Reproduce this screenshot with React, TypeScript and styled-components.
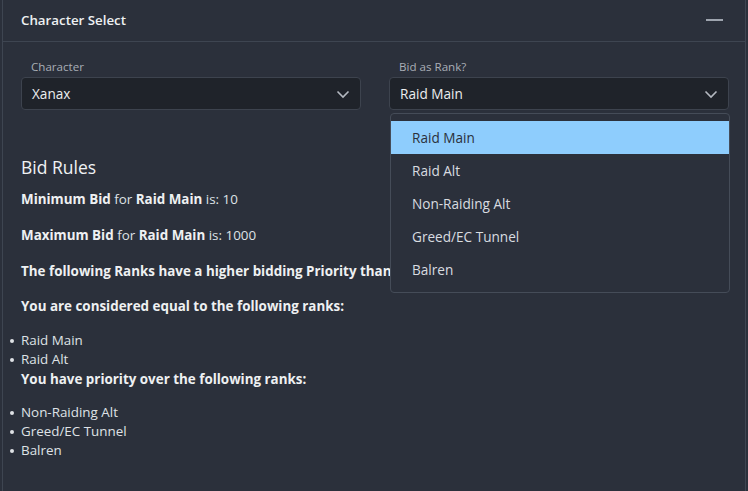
import React from "react";
import styled, { createGlobalStyle } from "styled-components";

const Global = createGlobalStyle`
  html, body { margin: 0; padding: 0; background: #2b303b; }
  body { font-family: "Segoe UI", "Open Sans", "Noto Sans", sans-serif; color: #e6e8eb; }
  * { box-sizing: border-box; }
`;

const Panel = styled.div`
  margin: 0 2px 0 2px;
  min-height: 491px;
  border-left: 1px solid #3e4551;
  border-right: 1px solid #3e4551;
  background: #2b303b;
`;

const Header = styled.div`
  height: 42px;
  display: flex;
  align-items: center;
  justify-content: space-between;
  padding: 0 22px 0 18px;
  border-bottom: 1px solid #3e4551;
`;

const Title = styled.div`
  font-size: 13.3px;
  font-weight: 600;
  color: #eef0f2;
  padding-bottom: 1px;
`;

const Minus = styled.div`
  width: 17px;
  height: 2px;
  background: #9ea4ae;
  margin-bottom: 2px;
`;

const Body = styled.div`
  padding: 17px 16px 0 18px;
`;

const Row = styled.div`
  display: grid;
  grid-template-columns: 1fr 1fr;
  gap: 28px;
`;

const Field = styled.div`
  position: relative;
  display: flex;
  flex-direction: column;
`;

const Label = styled.div`
  font-size: 11.6px;
  color: #a9aeb6;
  padding-left: 10px;
  height: 18px;
`;

const SelectBox = styled.div`
  height: 33px;
  border: 1px solid #3d434e;
  border-radius: 4px;
  background: #1f232a;
  display: flex;
  align-items: center;
  justify-content: space-between;
  padding: 0 10px 0 10px;
  font-size: 13.6px;
  color: #eceef0;
`;

const Menu = styled.div`
  position: absolute;
  top: 54px;
  left: 1px;
  right: -1px;
  background: #2b303b;
  border: 1px solid #454c58;
  border-radius: 4px;
  padding: 7px 0 6px;
  z-index: 5;
`;

const Item = styled.div<{ $active?: boolean }>`
  height: 33px;
  display: flex;
  align-items: center;
  padding-left: 21px;
  font-size: 13.6px;
  color: ${(p) => (p.$active ? "#2b303b" : "#d9dce0")};
  background: ${(p) => (p.$active ? "#8ecdfd" : "transparent")};
`;

const Rules = styled.div`
  margin-top: 45px;
`;

const Heading = styled.h4`
  margin: 0 0 10px;
  font-size: 17.5px;
  font-weight: 400;
  color: #f0f2f4;
  line-height: 24px;
`;

const Para = styled.p<{ $gap: number }>`
  margin: 0 0 ${(p) => p.$gap}px;
  font-size: 13.4px;
  line-height: 21px;
  color: #dfe2e6;
  white-space: nowrap;
  b { font-weight: 700; color: #eef0f2; }
`;

const List = styled.ul<{ $gap: number }>`
  margin: 0 0 ${(p) => p.$gap}px;
  padding: 0;
  list-style: none;
  font-size: 13.4px;
  line-height: 19px;
  color: #dfe2e6;
`;

const Bullet = styled.li`
  position: relative;
  &::before {
    content: "";
    position: absolute;
    left: -11px;
    top: 8px;
    width: 4px;
    height: 4px;
    border-radius: 50%;
    background: #dfe2e6;
  }
`;

const Chevron = () => (
  <svg width="14" height="14" viewBox="0 0 14 14" fill="none">
    <path d="M1.5 4.5 L7 10 L12.5 4.5" stroke="#b4b9c1" strokeWidth="1.6" />
  </svg>
);

export default function App() {
  const ranks = ["Raid Main", "Raid Alt", "Non-Raiding Alt", "Greed/EC Tunnel", "Balren"];
  return (
    <>
      <Global />
      <Panel>
        <Header>
          <Title>Character Select</Title>
          <Minus />
        </Header>
        <Body>
          <Row>
            <Field>
              <Label>Character</Label>
              <SelectBox>
                Xanax
                <Chevron />
              </SelectBox>
            </Field>
            <Field>
              <Label>Bid as Rank?</Label>
              <SelectBox>
                Raid Main
                <Chevron />
              </SelectBox>
              <Menu>
                {ranks.map((r, i) => (
                  <Item key={r} $active={i === 0}>
                    {r}
                  </Item>
                ))}
              </Menu>
            </Field>
          </Row>
          <Rules>
            <Heading>Bid Rules</Heading>
            <Para $gap={15}>
              <b>Minimum Bid</b> for <b>Raid Main</b> is: 10
            </Para>
            <Para $gap={15}>
              <b>Maximum Bid</b> for <b>Raid Main</b> is: 1000
            </Para>
            <Para $gap={14}>
              <b>The following Ranks have a higher bidding Priority than you:</b>
            </Para>
            <Para $gap={14}>
              <b>You are considered equal to the following ranks:</b>
            </Para>
            <List $gap={0}>
              <Bullet>Raid Main</Bullet>
              <Bullet>Raid Alt</Bullet>
            </List>
            <Para $gap={13}>
              <b>You have priority over the following ranks:</b>
            </Para>
            <List $gap={0}>
              <Bullet>Non-Raiding Alt</Bullet>
              <Bullet>Greed/EC Tunnel</Bullet>
              <Bullet>Balren</Bullet>
            </List>
          </Rules>
        </Body>
      </Panel>
    </>
  );
}
